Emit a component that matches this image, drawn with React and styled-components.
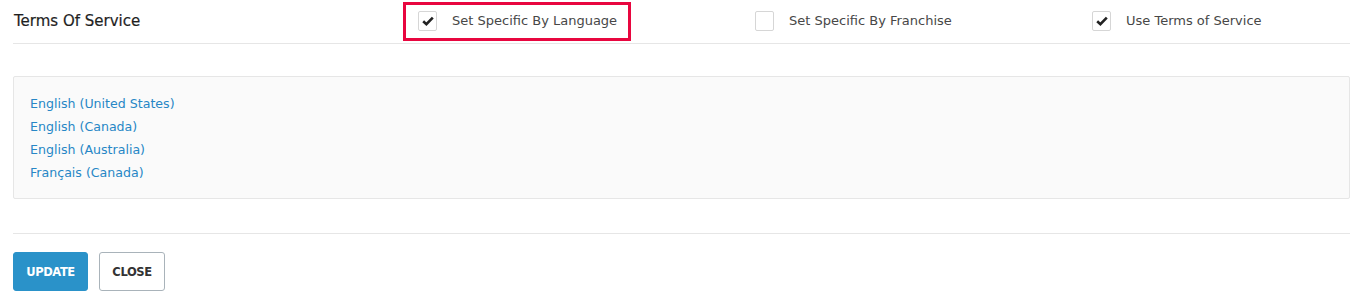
import React from "react";
import styled, { createGlobalStyle } from "styled-components";

const Global = createGlobalStyle`
  html, body { margin: 0; padding: 0; background: #fff; }
  body { font-family: "DejaVu Sans", "Liberation Sans", sans-serif; color: #333; }
`;

const Page = styled.div`
  padding: 0 8px 0 13px;
`;

const Header = styled.div`
  display: grid;
  grid-template-columns: 390px 337px 337px 1fr;
  align-items: center;
  padding-top: 2px;
  padding-bottom: 2px;
  border-bottom: 1px solid #e6e6e6;
`;

const Title = styled.h2`
  margin: 0;
  font-size: 15px;
  font-weight: 400;
  color: #1f1f1f;
  padding-left: 1px;
  transform: translateY(-1px);
  -webkit-text-stroke: 0.2px #1f1f1f;
`;

const Option = styled.label`
  display: inline-flex;
  align-items: center;
  gap: 15px;
  box-sizing: border-box;
  width: 228px;
  height: 39px;
  padding: 0 0 3px 12px;
  border: 3px solid ${(p) => (p.$highlight ? "#e8063f" : "transparent")};
  font-size: 13px;
  color: #474747;
  cursor: pointer;
`;

const Box = styled.span`
  display: inline-flex;
  align-items: center;
  justify-content: center;
  box-sizing: border-box;
  width: 19px;
  height: 20px;
  border: 1px solid #d6d6d6;
  border-radius: 2px;
  background: #fff;
  flex-shrink: 0;
  transform: translateY(1px);
`;

const Panel = styled.div`
  margin-top: 32px;
  box-sizing: border-box;
  height: 123px;
  padding: 15px 16px;
  background: #fafafa;
  border: 1px solid #e6e6e6;
  border-radius: 2px;
  display: flex;
  flex-direction: column;
  align-items: flex-start;
`;

const LangLink = styled.a`
  font-size: 12.6px;
  line-height: 23px;
  color: #2787c6;
  text-decoration: none;
`;

const Divider = styled.hr`
  margin: 34px 0 18px;
  border: 0;
  border-top: 1px solid #e6e6e6;
`;

const Actions = styled.div`
  display: flex;
  gap: 11px;
`;

const Button = styled.button`
  box-sizing: border-box;
  height: 39px;
  padding: 0;
  font-family: inherit;
  font-size: 11.5px;
  font-weight: 700;
  letter-spacing: -0.4px;
  text-transform: uppercase;
  border-radius: 3px;
  cursor: pointer;
  ${(p) =>
    p.$primary
      ? `background: #2a92c9; color: #fff; border: 1px solid #2a92c9; width: 75px;`
      : `background: #fff; color: #333; border: 1px solid #a9b3ba; width: 66px;`}
`;

const Check = () => (
  <svg width="12" height="10" viewBox="0 0 12 10">
    <path d="M1.2 5.2 L4.4 8.2 L10.8 1.6" fill="none" stroke="#222" strokeWidth="2.6" strokeLinejoin="miter" />
  </svg>
);

const options = [
  { label: "Set Specific By Language", checked: true, highlight: true },
  { label: "Set Specific By Franchise", checked: false },
  { label: "Use Terms of Service", checked: true },
];

const languages = [
  "English (United States)",
  "English (Canada)",
  "English (Australia)",
  "Français (Canada)",
];

export default function App() {
  return (
    <Page>
      <Global />
      <Header>
        <Title>Terms Of Service</Title>
        {options.map((o) => (
          <div key={o.label}>
            <Option $highlight={o.highlight}>
              <Box>{o.checked && <Check />}</Box>
              {o.label}
            </Option>
          </div>
        ))}
      </Header>
      <Panel>
        {languages.map((l) => (
          <LangLink key={l} href="#">
            {l}
          </LangLink>
        ))}
      </Panel>
      <Divider />
      <Actions>
        <Button $primary>Update</Button>
        <Button>Close</Button>
      </Actions>
    </Page>
  );
}
